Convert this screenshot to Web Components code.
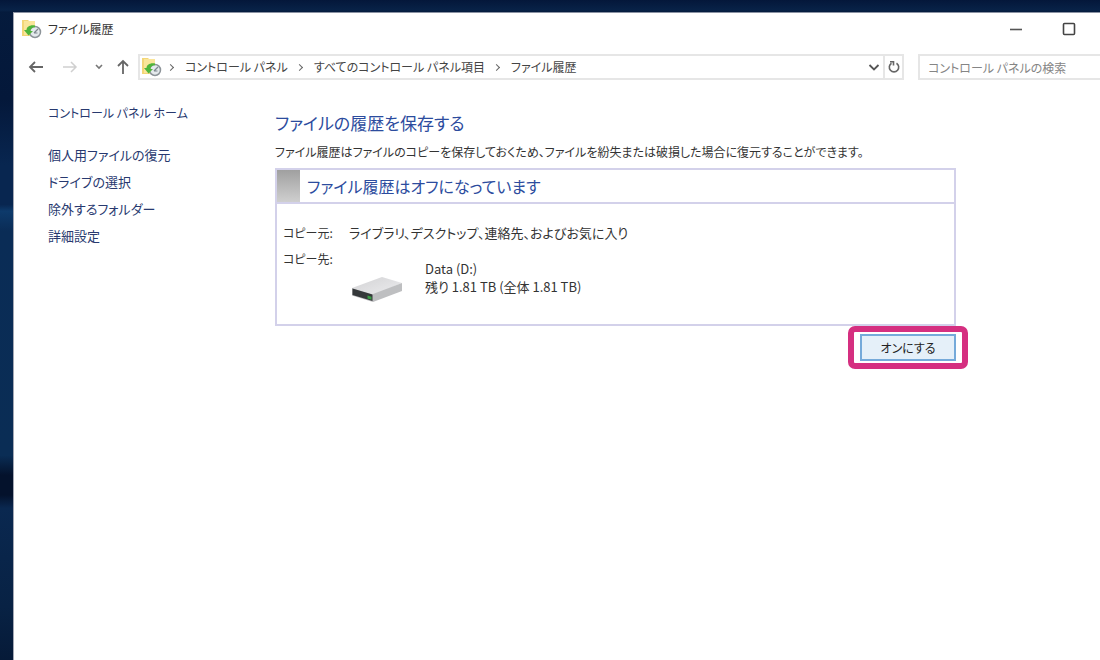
<!DOCTYPE html>
<html lang="ja">
<head>
<meta charset="utf-8">
<title>ファイル履歴</title>
<style>
html, body { margin: 0; min-height: 100%; }
body {
  font-family: "Noto Sans CJK JP", sans-serif;
  font-size: 12px;
  line-height: 18px;
  font-feature-settings: "palt";
  color: #333;
}
</style>
</head>
<body>
<desktop-shell>
  <app-window>
    <title-bar slot="title" label="ファイル履歴"></title-bar>
    <nav-bar slot="nav"></nav-bar>
    <side-nav slot="side"></side-nav>
    <history-panel>
      <status-card label="ファイル履歴はオフになっています">
        <drive-info></drive-info>
      </status-card>
      <callout-button slot="action">オンにする</callout-button>
    </history-panel>
  </app-window>
</desktop-shell>

<script>
function define(name, render) {
  customElements.define(name, class extends HTMLElement {
    constructor() {
      super();
      this.attachShadow({ mode: "open" });
    }
    connectedCallback() {
      this.shadowRoot.innerHTML = render(this);
    }
  });
}

define("history-icon", () => `
<style>
:host { display: block; flex: none; width: 20px; height: 20px; }
svg { display: block; }
</style>
<svg width="20" height="20" viewBox="0 0 20 20" aria-hidden="true">
  <path d="M0 1h6l1 1h6v15H0z" fill="#f3d677"/>
  <path d="M2 2h11v14H2z" fill="#fae59a"/>
  <circle cx="13" cy="13" r="5.500" fill="#e4e9ec" stroke="#8d9499" stroke-width="1.500"/>
  <path d="M12 14l4-4M12 14h3.500" stroke="#7d878e" stroke-width="1.200" fill="none"/>
  <path d="M13 6.500C8 5.500 4.500 8 4.500 11H2l4.500 5.500L11 12H8.500c.2-2.500 1.500-3.700 4.500-3.700z" fill="#4fb53a"/>
</svg>`);

define("desktop-shell", () => `
<style>
:host {
  display: flex; flex-direction: column; box-sizing: border-box; min-height: 100vh;
  padding: 12px 0 0 13px;
  background:
    linear-gradient(#04173a, #082247 10px, transparent 12px),
    linear-gradient(#051b3d 0, #04183a 15%, #082650 25%, #082650 31%, #0d3a6b 32%, #0a2c56 35%, #0a2d55 69%, #04122c 72%, #04122c 75%, #0a2850 77%, #082244 92%, #061a38);
}
</style>
<slot></slot>`);

define("app-window", () => `
<style>
:host {
  display: flex; flex-direction: column; flex: 1;
  background: #fff; border-top: 1px solid #8a92a3; border-left: 1px solid #a4a8b4;
}
.body { display: flex; align-items: flex-start; }
::slotted([slot="side"]) { flex: none; width: 261px; box-sizing: border-box; }
::slotted(history-panel) { flex: 1; min-width: 0; }
</style>
<slot name="title"></slot>
<slot name="nav"></slot>
<div class="body"><slot name="side"></slot><slot></slot></div>`);

define("title-bar", host => `
<style>
:host { display: flex; align-items: center; height: 32px; padding: 0 5px 0 8px; gap: 6px; }
h1 { flex: 1; margin: 0; font-size: 12px; font-weight: 400; line-height: 18px; }
button { width: 53px; height: 32px; padding: 0; border: 0; background: none; display: grid; place-items: center; }
.controls { display: flex; }
</style>
<history-icon></history-icon>
<h1>${host.getAttribute("label")}</h1>
<div class="controls">
  <button aria-label="最小化"><svg width="14" height="14"><path d="M1 7.500h12" stroke="#555" stroke-width="1.600"/></svg></button>
  <button aria-label="最大化"><svg width="14" height="14"><rect x="1.500" y="1.500" width="11" height="11" rx="1" fill="none" stroke="#444" stroke-width="1.600"/></svg></button>
</div>`);

define("nav-bar", () => `
<style>
:host { display: flex; align-items: center; height: 26px; padding: 9px 0 0 12px; }
button { display: grid; place-items: center; flex: none; height: 24px; padding: 0; border: 0; background: none; }
.arrow { width: 20px; }
.fwd { margin-left: 14px; }
.recent { width: 14px; margin: 0 7px 0 12px; }
.path {
  display: flex; align-items: center; flex: 1; min-width: 0; box-sizing: border-box; height: 26px;
  margin: 0 14px 0 5px; padding-left: 2px; border: 2px solid #e6e6e6;
}
ol { display: flex; flex: 1; margin: 0; padding: 0; list-style: none; white-space: nowrap; }
li { display: flex; align-items: center; }
li::before {
  content: ""; width: 4px; height: 4px; margin: 0 12px 0 9px;
  border: solid #666; border-width: 1px 1px 0 0; rotate: 45deg;
}
li:first-child::before { margin-left: 6px; }
a { color: #444; text-decoration: none; }
.drop { width: 18px; }
.reload { width: 19px; height: 22px; border-left: 2px solid #e6e6e6; }
input {
  flex: none; width: 182px; height: 26px; box-sizing: border-box; padding: 0 8px;
  border: 2px solid #e6e6e6; border-right: 0; background: #fff; border-radius: 0;
  font: inherit; font-feature-settings: inherit; color: #444;
}
input::placeholder { color: #858585; opacity: 1; }
</style>
<button class="arrow" aria-label="戻る"><svg width="18" height="14"><path d="M16 7H3M8 2L3 7l5 5" fill="none" stroke="#666" stroke-width="1.800"/></svg></button>
<button class="arrow fwd" aria-label="進む"><svg width="18" height="14"><path d="M2 7h13M10 2l5 5-5 5" fill="none" stroke="#d0d0d0" stroke-width="1.500"/></svg></button>
<button class="recent" aria-label="最近表示した場所"><svg width="10" height="8"><path d="M2 2l3 3 3-3" fill="none" stroke="#777" stroke-width="1.600"/></svg></button>
<button class="arrow" aria-label="上へ"><svg width="16" height="16"><path d="M8 15V2M3 7l5-5 5 5" fill="none" stroke="#666" stroke-width="1.800"/></svg></button>
<div class="path">
  <history-icon></history-icon>
  <ol>
    <li><a href="#control">コントロール パネル</a></li>
    <li><a href="#all">すべてのコントロール パネル項目</a></li>
    <li><a href="#history">ファイル履歴</a></li>
  </ol>
  <button class="drop" aria-label="以前の場所"><svg width="12" height="10"><path d="M1.500 3L6 7.500 10.500 3" fill="none" stroke="#555" stroke-width="1.800"/></svg></button>
  <button class="reload" aria-label="更新"><svg width="14" height="14"><path d="M9.500 3.200a4.700 4.700 0 1 1-5 0M3 1.800h3.500v3.700" fill="none" stroke="#666" stroke-width="1.600"/></svg></button>
</div>
<input type="search" aria-label="検索" placeholder="コントロール パネルの検索">`);

define("side-nav", () => `
<style>
:host { display: block; padding: 24px 0 0 34px; }
nav { display: flex; flex-direction: column; align-items: flex-start; gap: 9px; }
a { color: #28396f; font-size: 13px; text-decoration: none; white-space: nowrap; }
.home { margin-bottom: 15px; font-size: 12px; }
</style>
<nav>
  <a class="home" href="#home">コントロール パネル ホーム</a>
  <a href="#restore">個人用ファイルの復元</a>
  <a href="#drive">ドライブの選択</a>
  <a href="#exclude">除外するフォルダー</a>
  <a href="#advanced">詳細設定</a>
</nav>`);

define("history-panel", () => `
<style>
:host { display: block; max-width: 681px; padding: 31px 0 0; }
h2 { margin: 0; font-size: 17px; font-weight: 400; line-height: 24px; color: #2c4c9e; }
p { margin: 8px 0 7px; white-space: nowrap; }
.action { display: flex; justify-content: flex-end; padding-top: 8px; }
</style>
<h2>ファイルの履歴を保存する</h2>
<p>ファイル履歴はファイルのコピーを保存しておくため、ファイルを紛失または破損した場合に復元することができます。</p>
<slot></slot>
<div class="action"><slot name="action"></slot></div>`);

define("status-card", host => `
<style>
:host { display: block; border: 2px solid #d3d1ea; }
header { display: flex; align-items: center; height: 32px; gap: 7px; border-bottom: 2px solid #d3d1ea; }
header::before { content: ""; width: 23px; height: 32px; background: linear-gradient(#a0a0a0, #cfcfcf); }
h3 { margin: 0; font-size: 16px; font-weight: 400; line-height: 24px; color: #2c4c9e; }
</style>
<header><h3>${host.getAttribute("label")}</h3></header>
<slot></slot>`);

define("drive-info", () => `
<style>
:host { display: block; padding: 20px 6px; }
dl { display: grid; grid-template-columns: 66px 1fr; row-gap: 8px; margin: 0; }
dd { margin: 0; font-size: 13px; }
.drive { display: flex; gap: 20px; padding-top: 10px; }
svg { display: block; margin: 16px 0 0 2px; }
</style>
<dl>
  <dt>コピー元:</dt>
  <dd>ライブラリ、デスクトップ、連絡先、およびお気に入り</dd>
  <dt>コピー先:</dt>
  <dd class="drive">
    <svg width="54" height="28" viewBox="0 0 54 28" aria-hidden="true">
      <defs><linearGradient id="top" x2="1" y2="1"><stop stop-color="#d2d2d4"/><stop offset="1" stop-color="#ededef"/></linearGradient></defs>
      <path d="M1 12L31 1l20 6-28 12z" fill="url(#top)"/>
      <path d="M22 18L51 7v8L22 26z" fill="#bebfc1"/>
      <path d="M1 12l21 6.500V26L1 19.500z" fill="#bcbcbf"/>
      <path d="M1.500 12.500l20 6V25l-20-6z" fill="#35383a"/>
      <path d="M16.500 19.500l4 1.200v3l-4-1.200z" fill="#3a9c45"/>
    </svg>
    <div>Data (D:)<br>残り 1.81 TB (全体 1.81 TB)</div>
  </dd>
</dl>`);

define("callout-button", () => `
<style>
:host { display: block; position: relative; }
button {
  display: block; width: 96px; height: 27px; padding: 0; box-sizing: border-box;
  border: 2px solid #75aada; background: #e5f0f9; color: #222;
  font: inherit; font-feature-settings: inherit; line-height: 18px;
}
.ring { position: absolute; inset: -8px -12px; border: 6px solid #d52f80; border-radius: 7px; pointer-events: none; }
</style>
<button type="button"><slot></slot></button>
<span class="ring"></span>`);
</script>
</body>
</html>
